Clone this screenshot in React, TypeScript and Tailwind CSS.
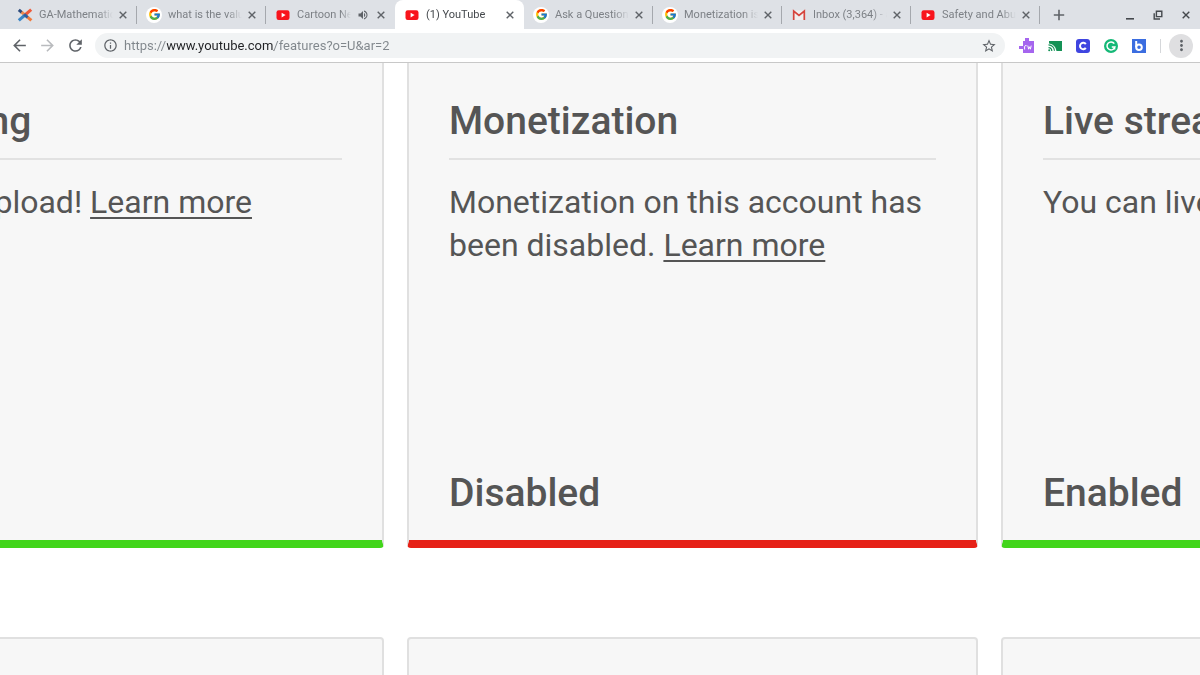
import type { ReactNode } from "react";
import { FcGoogle } from "react-icons/fc";
import {
  MdArrowBack,
  MdArrowForward,
  MdInfoOutline,
  MdMoreVert,
  MdRefresh,
  MdStarBorder,
  MdVolumeUp,
} from "react-icons/md";

type Tab = {
  title: string;
  icon: "docs" | "google" | "youtube" | "gmail";
  active?: boolean;
  audible?: boolean;
};

type Feature = {
  title: string;
  text: string;
  link: string;
  status: string;
  enabled: boolean;
};

const tabs: Tab[] = [
  { title: "GA-Mathematics", icon: "docs" },
  { title: "what is the value of", icon: "google" },
  { title: "Cartoon Network", icon: "youtube", audible: true },
  { title: "(1) YouTube", icon: "youtube", active: true },
  { title: "Ask a Question -", icon: "google" },
  { title: "Monetization is d", icon: "google" },
  { title: "Inbox (3,364) - a", icon: "gmail" },
  { title: "Safety and Abuse", icon: "youtube" },
];

const features: Feature[] = [
  { title: "Uploading", text: "You can upload!", link: "Learn more", status: "", enabled: true },
  {
    title: "Monetization",
    text: "Monetization on this account has been disabled.",
    link: "Learn more",
    status: "Disabled",
    enabled: false,
  },
  { title: "Live streaming", text: "You can live stream!", link: "Learn more", status: "Enabled", enabled: true },
];

function Favicon({ name }: { name: Tab["icon"] }) {
  if (name === "google") {
    return (
      <span className="flex size-4 shrink-0 items-center justify-center rounded-full bg-white">
        <FcGoogle size={13} />
      </span>
    );
  }
  if (name === "youtube") {
    return (
      <svg viewBox="0 0 16 16" className="size-4 shrink-0">
        <rect x="1.5" y="3.2" width="13" height="9.8" rx="2.2" fill="#f8141c" />
        <path d="M6.6 5.8v4.6l4-2.3z" fill="#fff" />
      </svg>
    );
  }
  if (name === "gmail") {
    return (
      <svg viewBox="0 0 16 16" className="size-4 shrink-0">
        <path d="M2 3.5h12v9.5H2z" fill="#f1efef" />
        <path d="M2.7 13V4l5.3 4.4L13.3 4v9" fill="none" stroke="#d6453d" strokeWidth="1.7" />
      </svg>
    );
  }
  return (
    <svg viewBox="0 0 16 16" className="size-4 shrink-0" fill="none" strokeWidth="3">
      <path d="M1.8 2.8 5 5.6" stroke="#2c4a7c" />
      <path d="M4.6 5.2 8 8.2" stroke="#f08a4b" />
      <path d="M1.8 13.4 8 8" stroke="#3b86c6" />
      <path d="M14.2 2.6 8 8" stroke="#ee5a3a" />
      <path d="m9.6 9.4 4.8 4" stroke="#f07a3c" />
      <path d="m7.2 7.4 3.4 2.9" stroke="#2f5f9f" />
    </svg>
  );
}

function Cross({ className }: { className: string }) {
  return (
    <svg viewBox="0 0 8 8" className={className} fill="none" stroke="currentColor" strokeWidth="1.4">
      <path d="m.7.7 6.6 6.6M7.3.7.7 7.3" />
    </svg>
  );
}

function TabItem({ tab, divider }: { tab: Tab; divider: boolean }) {
  return (
    <div
      className={
        tab.active
          ? "relative flex h-full min-w-0 flex-1 items-center rounded-t-lg bg-white pl-[9px] pr-[10px] text-[#45494d]"
          : "relative flex h-full min-w-0 flex-1 items-center pl-[9px] pr-[10px] text-[#7d8186]"
      }
    >
      <Favicon name={tab.icon} />
      <button
        type="button"
        className="ml-1.5 mr-1.5 min-w-0 flex-1 overflow-hidden whitespace-nowrap text-left text-[11px] leading-4 [mask-image:linear-gradient(to_right,#000_80%,transparent)]"
      >
        {tab.title}
      </button>
      {tab.audible && <MdVolumeUp size={12} className="mr-2 shrink-0 text-[#5f6368]" />}
      <button type="button" aria-label="Close tab" className="shrink-0 text-[#5f6368]">
        <Cross className="size-2" />
      </button>
      {divider && <span className="absolute right-0 top-1.5 h-4.5 w-px bg-[#a5a8ad]" />}
    </div>
  );
}

function TabStrip() {
  return (
    <div className="flex h-[29px] bg-[#dee1e6] pl-2">
      <div className="flex min-w-0 flex-1">
        {tabs.map((tab, i) => (
          <TabItem key={tab.title} tab={tab} divider={!tab.active && !tabs[i + 1]?.active} />
        ))}
      </div>
      <button type="button" aria-label="New tab" className="mr-[38px] flex w-[38px] items-center justify-center">
        <svg viewBox="0 0 12 12" className="size-3" stroke="#5f6368" strokeWidth="1.6">
          <path d="M6 .8v10.4M.8 6h10.4" />
        </svg>
      </button>
      <div className="flex text-[#45494d]">
        <button type="button" aria-label="Minimize" className="flex w-7 items-center justify-center">
          <svg viewBox="0 0 12 12" className="size-3">
            <path d="M2 9h8v1.6H2z" fill="currentColor" />
          </svg>
        </button>
        <button type="button" aria-label="Restore" className="flex w-7 items-center justify-center">
          <svg viewBox="0 0 12 12" className="size-3" fill="none" stroke="currentColor" strokeWidth="1.4">
            <path d="M4.4 2.2h5.4v5.4H4.4zM2.2 4.2v5.8H8" />
          </svg>
        </button>
        <button type="button" aria-label="Close" className="flex w-7 items-center justify-center">
          <Cross className="size-2" />
        </button>
      </div>
    </div>
  );
}

function ToolButton({ label, children }: { label: string; children: ReactNode }) {
  return (
    <button type="button" aria-label={label} className="flex size-7 shrink-0 items-center justify-center">
      {children}
    </button>
  );
}

function Toolbar() {
  return (
    <div className="flex h-[34px] items-center border-b border-[#c8c8c8] bg-white pl-[5px] pr-[7px] text-[#5f6368]">
      <ToolButton label="Back">
        <MdArrowBack size={19} />
      </ToolButton>
      <ToolButton label="Forward">
        <MdArrowForward size={19} className="text-[#b9bbbe]" />
      </ToolButton>
      <ToolButton label="Reload">
        <MdRefresh size={19} />
      </ToolButton>
      <div className="ml-1.5 mr-2 flex h-[25px] flex-1 items-center rounded-full bg-[#f1f3f4] px-2">
        <MdInfoOutline size={15} className="shrink-0" />
        <input
          type="text"
          aria-label="Address"
          defaultValue="https://www.youtube.com/features?o=U&ar=2"
          className="ml-1.5 min-w-0 flex-1 bg-[linear-gradient(to_right,#80868b_43px,#202124_43px,#202124_150px,#80868b_150px)] bg-clip-text text-[13px] leading-5 text-transparent outline-none"
        />
        <button type="button" aria-label="Bookmark this page">
          <MdStarBorder size={16} />
        </button>
      </div>
      <ToolButton label="Read and write">
        <svg viewBox="0 0 16 16" className="size-4">
          <path d="M6 0h4v3h5v12H4v-4H0V8h4V3h2z" fill="#a565ee" />
          <path d="M5.6 11.5V8.2q0-.8 2-.5M8.8 7.6l.8 3.6.9-2.4.9 2.4.8-3.6" stroke="#fff" strokeWidth="1" fill="none" />
        </svg>
      </ToolButton>
      <ToolButton label="Cast">
        <svg viewBox="0 0 16 16" className="size-4">
          <path d="M2 3h13v10H2z" fill="#159256" />
          <path d="M0 5.5h2A9 9 0 0 1 9.5 13v1H0z" fill="#fff" />
          <path d="M1.5 6.8a6 6 0 0 1 6 6M1.5 9.6a3.4 3.4 0 0 1 3.3 3.3" stroke="#159256" strokeWidth="1.2" fill="none" />
          <circle cx="2.2" cy="12.3" r="1" fill="#159256" />
        </svg>
      </ToolButton>
      <ToolButton label="Clever">
        <svg viewBox="0 0 16 16" className="size-4">
          <rect x="1" y="1" width="14" height="14" rx="3" fill="#3f45e0" />
          <path d="M10.8 6.1a3.2 3.2 0 1 0 0 3.8" stroke="#fff" strokeWidth="2" fill="none" />
        </svg>
      </ToolButton>
      <ToolButton label="Grammarly">
        <svg viewBox="0 0 16 16" className="size-4">
          <circle cx="8" cy="8" r="7" fill="#15b877" />
          <path d="M11.3 5.6a4 4 0 1 0 .6 3.4H8.8M11.6 9v2.6" stroke="#fff" strokeWidth="1.5" fill="none" />
        </svg>
      </ToolButton>
      <ToolButton label="Bitly">
        <svg viewBox="0 0 16 16" className="size-4">
          <path d="M1 1h14v14H1z" fill="#3b6de0" />
          <path d="M5.2 3v6.2" stroke="#fff" strokeWidth="2" />
          <circle cx="8" cy="9.2" r="2.8" stroke="#fff" strokeWidth="2" fill="none" />
        </svg>
      </ToolButton>
      <span className="ml-[7px] mr-2 h-3.5 w-px bg-[#d5d7da]" />
      <button type="button" aria-label="Menu" className="flex size-6 items-center justify-center rounded-full bg-[#dfdfe1]">
        <MdMoreVert size={17} />
      </button>
    </div>
  );
}

function FeatureCard({ feature }: { feature: Feature }) {
  return (
    <article
      className={
        feature.enabled
          ? "flex h-[485px] flex-col rounded-b-[4px] border-x-2 border-b-8 border-x-[#e0e0e0] border-b-[#42d51b] bg-[#f7f7f7] px-10 pb-[22px] pt-[33px]"
          : "flex h-[485px] flex-col rounded-b-[4px] border-x-2 border-b-8 border-x-[#e0e0e0] border-b-[#e62117] bg-[#f7f7f7] px-10 pb-[22px] pt-[33px]"
      }
    >
      <h2 className="border-b-2 border-[#e2e2e2] pb-3 text-[39px] font-medium leading-[50px]">
        {feature.title}
      </h2>
      <p className="mt-[21px] text-[32px] leading-[43px]">
        {feature.text}{" "}
        <a href="#learn-more" className="underline decoration-2 underline-offset-4">
          {feature.link}
        </a>
      </p>
      <p className="mt-auto text-[39px] font-medium leading-[50px]">{feature.status}</p>
    </article>
  );
}

export default function App() {
  return (
    <div className="flex h-screen flex-col overflow-hidden bg-white font-['Roboto',sans-serif]">
      <header>
        <TabStrip />
        <Toolbar />
      </header>
      <main className="flex-1 overflow-hidden text-[#555]">
        <div className="-ml-[187px] -mr-[372px] grid grid-cols-3 gap-x-[23px] gap-y-[89px]">
          {features.map((feature) => (
            <FeatureCard key={feature.title} feature={feature} />
          ))}
          {features.map((feature) => (
            <div key={feature.title} className="h-40 rounded-[4px] border-2 border-[#e0e0e0] bg-[#f7f7f7]" />
          ))}
        </div>
      </main>
    </div>
  );
}
